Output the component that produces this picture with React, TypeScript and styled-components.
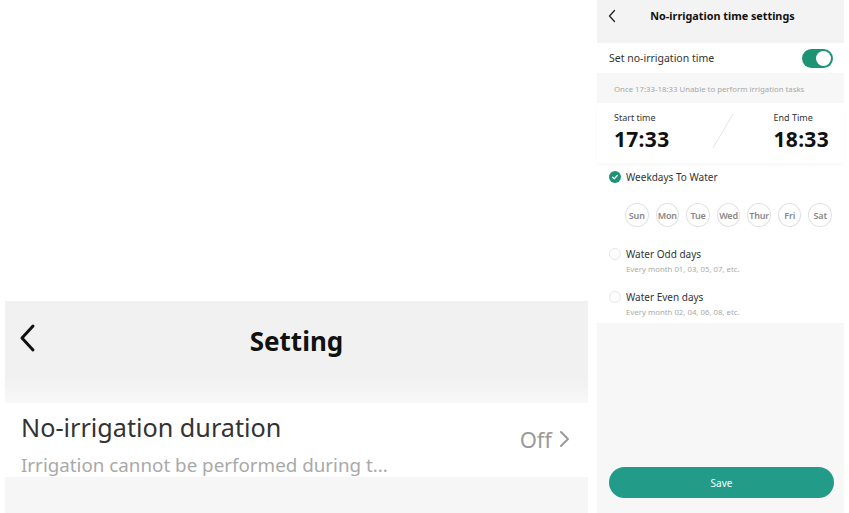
import React from "react";
import styled, { createGlobalStyle } from "styled-components";

const Global = createGlobalStyle`
  html, body { margin: 0; padding: 0; background: #ffffff; }
  body { font-family: "Noto Sans", "Open Sans", Roboto, sans-serif; }
  * { box-sizing: border-box; }
`;

const Stage = styled.div`
  display: flex;
  align-items: flex-end;
  gap: 9px;
  height: 513px;
  padding: 0 5px;
  overflow: hidden;
`;

/* ---------- left: Setting page ---------- */
const SettingPanel = styled.div`
  width: 583px;
  height: 212px;
  display: flex;
  flex-direction: column;
  background: #f6f6f6;
`;

const SettingHeader = styled.div`
  position: relative;
  height: 102px;
  flex-shrink: 0;
  display: flex;
  align-items: flex-start;
  justify-content: center;
  padding-top: 22px;
  background: linear-gradient(#f1f1f1 0, #f1f1f1 78px, #f8f8f8 102px);
`;

const BigBack = styled.svg`
  position: absolute;
  left: 13px;
  top: 22px;
`;

const BigTitle = styled.div`
  font-size: 26px;
  font-weight: 700;
  color: #111;
  line-height: 36px;
`;

const SettingRow = styled.div`
  height: 74px;
  flex-shrink: 0;
  background: #ffffff;
  display: flex;
  align-items: center;
  justify-content: space-between;
  padding: 0 18px 0 16px;
`;

const RowTexts = styled.div`
  display: flex;
  flex-direction: column;
  gap: 11px;
  margin-top: 8px;
`;

const RowTitle = styled.div`
  font-size: 25.2px;
  color: #333;
  line-height: 30px;
`;

const RowSub = styled.div`
  font-size: 18.8px;
  color: #a9a9a9;
  line-height: 24px;
`;

const RowValue = styled.div`
  display: flex;
  align-items: center;
  gap: 6px;
  font-size: 22px;
  color: #9a9a9a;
  margin-bottom: 2px;
`;

/* ---------- right: No-irrigation page ---------- */
const Phone = styled.div`
  width: 247px;
  height: 513px;
  display: flex;
  flex-direction: column;
  background: #f7f7f7;
`;

const Header = styled.div`
  position: relative;
  height: 43px;
  flex-shrink: 0;
  background: #f3f3f3;
  display: flex;
  justify-content: center;
  padding-top: 8px;
`;

const SmallBack = styled.svg`
  position: absolute;
  left: 11px;
  top: 9px;
`;

const Title = styled.div`
  font-size: 10.8px;
  font-weight: 700;
  color: #111;
  line-height: 16px;
  margin-left: 4px;
`;

const ToggleRow = styled.div`
  height: 30px;
  flex-shrink: 0;
  background: #ffffff;
  display: flex;
  align-items: center;
  justify-content: space-between;
  padding: 0 11px 0 12px;
  font-size: 10.5px;
  color: #333;
`;

const Switch = styled.div`
  width: 31px;
  height: 19px;
  border-radius: 10px;
  background: #1d9274;
  position: relative;
  &::after {
    content: "";
    position: absolute;
    right: 2px;
    top: 2px;
    width: 15px;
    height: 15px;
    border-radius: 50%;
    background: #fff;
  }
`;

const Info = styled.div`
  height: 30px;
  flex-shrink: 0;
  display: flex;
  align-items: center;
  padding: 2px 0 0 17px;
  font-size: 7.8px;
  color: #a8a8a8;
`;

const Card = styled.div`
  background: #ffffff;
  flex-shrink: 0;
  display: flex;
  flex-direction: column;
  padding-bottom: 5px;
`;

const TimeBlock = styled.div`
  height: 60px;
  flex-shrink: 0;
  display: flex;
  align-items: flex-start;
  justify-content: space-between;
  padding: 8px 15px 0 17px;
  position: relative;
  box-shadow: 0 2px 4px rgba(0, 0, 0, 0.03);
`;

const TimeCol = styled.div`
  display: flex;
  flex-direction: column;
`;

const TimeLabel = styled.div`
  font-size: 9px;
  color: #333;
  line-height: 13px;
`;

const TimeValue = styled.div`
  font-size: 21px;
  font-weight: 700;
  color: #111;
  line-height: 30px;
  letter-spacing: 0.3px;
`;

const Slash = styled.svg`
  position: absolute;
  left: 114px;
  top: 10px;
`;

const Options = styled.div`
  display: flex;
  flex-direction: column;
  padding: 6px 12px 0 12px;
`;

const OptionHead = styled.div`
  display: flex;
  align-items: center;
  gap: 5px;
  height: 16px;
  font-size: 10px;
  color: #333;
`;

const Radio = styled.div<{ $on?: boolean }>`
  width: 12px;
  height: 12px;
  border-radius: 50%;
  display: flex;
  align-items: center;
  justify-content: center;
  background: ${(p) => (p.$on ? "#1d9274" : "#fff")};
  border: ${(p) => (p.$on ? "none" : "1px solid #e6e6e6")};
`;

const Days = styled.div`
  display: flex;
  gap: 7px;
  padding: 18px 0 0 16px;
  margin-bottom: 19px;
`;

const Day = styled.div`
  width: 24px;
  height: 24px;
  border-radius: 50%;
  border: 1px solid #e2e2e2;
  display: flex;
  align-items: center;
  justify-content: center;
  font-size: 9px;
  font-weight: 600;
  color: #888;
  letter-spacing: -0.2px;
`;

const OptionBlock = styled.div`
  display: flex;
  flex-direction: column;
  margin-bottom: 14px;
  &:last-child {
    margin-bottom: 0;
  }
`;

const OptionSub = styled.div`
  font-size: 7.8px;
  color: #aaa;
  padding-left: 17px;
  line-height: 12px;
  margin-top: 1px;
`;

const Spacer = styled.div`
  flex: 1;
`;

const SaveBar = styled.div`
  padding: 0 10px 15px 12px;
`;

const SaveButton = styled.button`
  width: 100%;
  height: 31px;
  border: none;
  border-radius: 16px;
  background: #229b89;
  color: #fff;
  font-family: inherit;
  font-size: 10px;
`;

const days = ["Sun", "Mon", "Tue", "Wed", "Thur", "Fri", "Sat"];

export default function App() {
  return (
    <>
      <Global />
      <Stage>
        <SettingPanel>
          <SettingHeader>
            <BigBack width="20" height="30" viewBox="0 0 20 30">
              <path d="M15 3 L4 15 L15 27" fill="none" stroke="#111" strokeWidth="3" strokeLinecap="round" strokeLinejoin="round" />
            </BigBack>
            <BigTitle>Setting</BigTitle>
          </SettingHeader>
          <SettingRow>
            <RowTexts>
              <RowTitle>No-irrigation duration</RowTitle>
              <RowSub>Irrigation cannot be performed during t...</RowSub>
            </RowTexts>
            <RowValue>
              Off
              <svg width="12" height="20" viewBox="0 0 12 20">
                <path d="M3 3 L10 10 L3 17" fill="none" stroke="#9a9a9a" strokeWidth="2" strokeLinecap="round" strokeLinejoin="round" />
              </svg>
            </RowValue>
          </SettingRow>
        </SettingPanel>

        <Phone>
          <Header>
            <SmallBack width="8" height="14" viewBox="0 0 8 14">
              <path d="M6.5 1.5 L1.5 7 L6.5 12.5" fill="none" stroke="#222" strokeWidth="1.3" strokeLinecap="round" strokeLinejoin="round" />
            </SmallBack>
            <Title>No-irrigation time settings</Title>
          </Header>
          <ToggleRow>
            Set no-irrigation time
            <Switch />
          </ToggleRow>
          <Info>Once 17:33-18:33 Unable to perform irrigation tasks</Info>
          <Card>
            <TimeBlock>
              <TimeCol>
                <TimeLabel>Start time</TimeLabel>
                <TimeValue>17:33</TimeValue>
              </TimeCol>
              <Slash width="24" height="36" viewBox="0 0 24 36">
                <path d="M22 1 L2 35" stroke="#e4e4e4" strokeWidth="1" />
              </Slash>
              <TimeCol>
                <TimeLabel>End Time</TimeLabel>
                <TimeValue>18:33</TimeValue>
              </TimeCol>
            </TimeBlock>
            <Options>
              <OptionHead>
                <Radio $on>
                  <svg width="8" height="8" viewBox="0 0 8 8">
                    <path d="M1.6 4.2 L3.3 5.8 L6.4 2.4" fill="none" stroke="#fff" strokeWidth="1.3" strokeLinecap="round" strokeLinejoin="round" />
                  </svg>
                </Radio>
                Weekdays To Water
              </OptionHead>
              <Days>
                {days.map((d) => (
                  <Day key={d}>{d}</Day>
                ))}
              </Days>
              <OptionBlock>
                <OptionHead>
                  <Radio />
                  Water Odd days
                </OptionHead>
                <OptionSub>Every month 01, 03, 05, 07, etc.</OptionSub>
              </OptionBlock>
              <OptionBlock>
                <OptionHead>
                  <Radio />
                  Water Even days
                </OptionHead>
                <OptionSub>Every month 02, 04, 06, 08, etc.</OptionSub>
              </OptionBlock>
            </Options>
          </Card>
          <Spacer />
          <SaveBar>
            <SaveButton>Save</SaveButton>
          </SaveBar>
        </Phone>
      </Stage>
    </>
  );
}
